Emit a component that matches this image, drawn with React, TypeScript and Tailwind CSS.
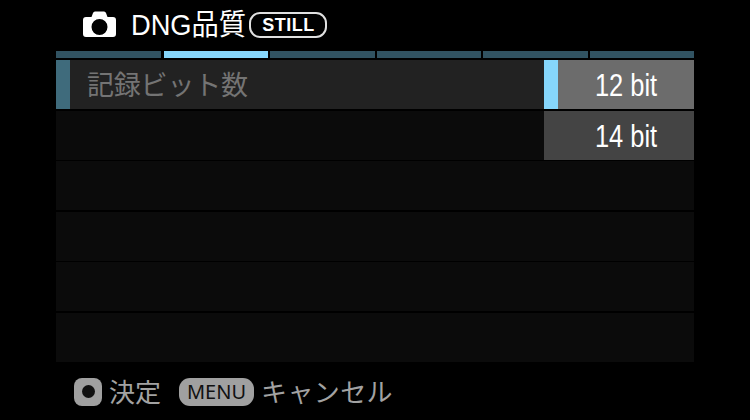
const FONT = "font-['Liberation_Sans','Noto_Sans_CJK_JP',sans-serif]";

function CameraIcon() {
  return (
    <svg width="33" height="26" viewBox="0 0 33 26" className="mb-[3px]" aria-hidden>
      <path
        fill="#fff"
        fillRule="evenodd"
        d="M3 6H8.500L10 2Q10.500 .5 12 .5H21Q22.500 .5 23 2L24.500 6H30A3 3 0 0 1 33 9V23A3 3 0 0 1 30 26H3A3 3 0 0 1 0 23V9A3 3 0 0 1 3 6ZM16.500 8a8 8 0 1 0 0 16a8 8 0 0 0 0-16Z"
      />
    </svg>
  );
}

function Row({ label, active }: { label?: string; active?: boolean }) {
  return (
    <div className={`flex h-[49px] ${active ? "bg-[#222222]" : "bg-[#0b0b0b]"}`}>
      {active && <div className="w-[14px] bg-[#3f6b7c]" />}
      {label && (
        <span className="ml-[17px] text-[27px] leading-[53px] tracking-[-0.2px] text-[#747474]">
          {label}
        </span>
      )}
    </div>
  );
}

export default function App() {
  const tabs = [false, true, false, false, false, false];
  return (
    <div className={`flex h-[420px] w-[750px] flex-col overflow-hidden bg-black px-[56px] ${FONT}`}>
      {/* Title */}
      <div className="flex h-[51px] items-center pl-[27px]">
        <CameraIcon />
        <span className="ml-[15px] origin-left scale-x-[0.94] text-[29px] leading-none text-white">DNG品質</span>
        <span className="-ml-[4px] mb-[1px] flex h-[26px] w-[78px] items-center justify-center rounded-[11px] border-2 border-[#e0e0e0] text-[18px] font-bold tracking-[0.5px] text-white">
          STILL
        </span>
      </div>

      {/* Tabs */}
      <div className="flex h-[7px] w-[638px] gap-[2px]">
        {tabs.map((on, i) => (
          <div key={i} className={`flex-1 first:mr-[1px] ${on ? "bg-[#86d6fb]" : "bg-[#315362]"}`} />
        ))}
      </div>

      {/* List */}
      <div className="relative mt-[2px] flex w-[638px] flex-col gap-[1.6px]">
        <Row label="記録ビット数" active />
        <Row />
        <Row />
        <Row />
        <Row />
        <Row />

        {/* Value dropdown */}
        <div className="absolute right-0 top-0 flex w-[150px] flex-col gap-[2px]">
          <div className="flex h-[49px] bg-[#6c6c6c]">
            <div className="w-[14px] bg-[#86d6fb]" />
            <span className="flex-1 scale-x-[0.82] text-center text-[31px] leading-[51px] text-white">12 bit</span>
          </div>
          <div className="flex h-[49px] bg-[#444444] pl-[14px]">
            <span className="flex-1 scale-x-[0.82] text-center text-[31px] leading-[51px] text-white">14 bit</span>
          </div>
        </div>
      </div>

      {/* Footer */}
      <div className="mt-[14px] flex items-center pl-[18px]">
        <div className="flex h-[28px] w-[28px] items-center justify-center rounded-[8px] bg-[#a0a0a0]">
          <div className="h-[13px] w-[13px] rounded-full bg-[#111111]" />
        </div>
        <span className="ml-[7px] pt-[2px] text-[26px] leading-[30px] text-[#a2a2a2]">決定</span>
        <span className="ml-[18px] flex h-[28px] w-[75px] items-center justify-center rounded-[11px] bg-[#a0a0a0] font-['Noto_Sans',sans-serif] text-[20px] leading-none text-[#111111]">
          MENU
        </span>
        <span className="ml-[7px] pt-[2px] text-[26px] leading-[30px] tracking-[0.4px] text-[#a2a2a2]">キャンセル</span>
      </div>
    </div>
  );
}
